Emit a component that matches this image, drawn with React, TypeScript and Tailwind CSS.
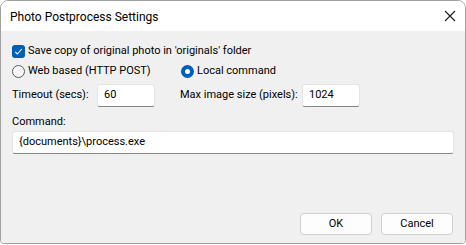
import React from 'react';

const font = { fontFamily: '"Segoe UI", Roboto, sans-serif' };

const Radio = ({ checked, label }: { checked?: boolean; label: string }) => (
  <label className="flex items-center gap-[3px]">
    {checked ? (
      <span className="w-[13px] h-[13px] rounded-full bg-[#005fb8] flex items-center justify-center">
        <span className="w-[5px] h-[5px] rounded-full bg-white" />
      </span>
    ) : (
      <span className="w-[13px] h-[13px] rounded-full border border-[#5d5d5d] bg-[#f7f7f7]" />
    )}
    <span>{label}</span>
  </label>
);

const Field = ({ value, className }: { value: string; className: string }) => (
  <div className={`h-[23px] bg-white border border-[#e5e5e5] border-b-[#868686] rounded-[3px] flex items-center px-[6px] ${className}`}>
    {value}
  </div>
);

export default function App() {
  return (
    <div className="w-[466px] h-[245px] bg-white">
      <div
        className="w-[466px] h-[244px] border border-[#a0a0a0] rounded-t-[8px] rounded-b-[4px] overflow-hidden flex flex-col text-[11px] text-black"
        style={font}
      >
        <div className="h-[30px] bg-white flex items-center justify-between pl-[9px] pr-[9px] shrink-0">
          <span className="text-[12px] pt-[2px]">Photo Postprocess Settings</span>
          <svg width="12" height="12" viewBox="0 0 12 12">
            <path d="M1 1L11 11M11 1L1 11" stroke="#1a1a1a" strokeWidth="1.1" />
          </svg>
        </div>
        <div className="flex-1 bg-[#f0f0f0] px-[11px] pt-[13px] flex flex-col">
          <label className="flex items-center gap-[3px] h-[14px]">
            <span className="w-[13px] h-[13px] rounded-[3px] bg-[#005fb8] flex items-center justify-center">
              <svg width="9" height="9" viewBox="0 0 9 9">
                <path d="M1.2 4.8L3.4 7L7.8 2" fill="none" stroke="white" strokeWidth="1.1" />
              </svg>
            </span>
            <span>Save copy of original photo in 'originals' folder</span>
          </label>
          <div className="flex items-center h-[14px] mt-[6px]">
            <div className="w-[169px]">
              <Radio label="Web based (HTTP POST)" />
            </div>
            <Radio checked label="Local command" />
          </div>
          <div className="flex items-center mt-[6px] whitespace-nowrap">
            <span className="w-[85px]">Timeout (secs):</span>
            <Field value="60" className="w-[58px]" />
            <span className="ml-[25px] w-[122px]">Max image size (pixels):</span>
            <Field value="1024" className="w-[58px]" />
          </div>
          <div className="mt-[7px] leading-[16px]">Command:</div>
          <Field value="{documents}\process.exe" className="w-[442px] mt-[1px] h-[22px]" />
          <div className="flex justify-end gap-[9px] mt-auto mb-[8px] pr-[1px]">
            <button className="w-[72px] h-[22px] bg-[#fdfdfd] border border-[#d0d0d0] rounded-[4px]">OK</button>
            <button className="w-[72px] h-[22px] bg-[#fdfdfd] border border-[#d0d0d0] rounded-[4px]">Cancel</button>
          </div>
        </div>
      </div>
    </div>
  );
}
